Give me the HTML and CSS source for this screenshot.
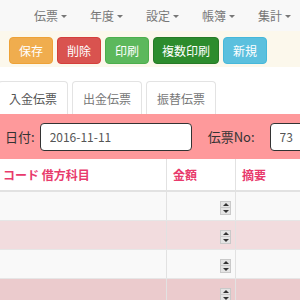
FILE: index.html
```html
<!DOCTYPE html>
<html lang="ja">
<head>
    <meta charset="UTF-8" />
    <title>伝票入力</title>
    <link rel="stylesheet" href="styles.css">
</head>
<body>

<nav class="navbar">
    <ul class="menu">
        <li>伝票<span class="caret"></span></li>
        <li>年度<span class="caret"></span></li>
        <li>設定<span class="caret"></span></li>
        <li>帳簿<span class="caret"></span></li>
        <li>集計<span class="caret"></span></li>
    </ul>
</nav>

<div class="toolbar">
    <button class="btn btn-save">保存</button>
    <button class="btn btn-delete">削除</button>
    <button class="btn btn-print">印刷</button>
    <button class="btn btn-multi">複数印刷</button>
    <button class="btn btn-new">新規</button>
</div>

<ul class="tabs">
    <li class="tab active">入金伝票</li>
    <li class="tab">出金伝票</li>
    <li class="tab">振替伝票</li>
</ul>

<div class="form-band">
    <label class="field-label">日付:</label>
    <input type="text" class="field date-field" value="2016-11-11" />
    <label class="field-label no-label">伝票No:</label>
    <input type="text" class="field no-field" value="73" />
</div>

<div class="table-wrap">
<table class="slip">
    <thead>
        <tr>
            <th class="col-account">コード 借方科目</th>
            <th class="col-amount">金額</th>
            <th class="col-memo">摘要</th>
        </tr>
    </thead>
    <tbody>
        <tr class="row-light">
            <td></td>
            <td class="amount"><span class="spin"><i class="up"></i><i class="down"></i></span></td>
            <td></td>
        </tr>
        <tr class="row-pink">
            <td></td>
            <td class="amount"><span class="spin"><i class="up"></i><i class="down"></i></span></td>
            <td></td>
        </tr>
        <tr class="row-light">
            <td></td>
            <td class="amount"><span class="spin"><i class="up"></i><i class="down"></i></span></td>
            <td></td>
        </tr>
        <tr class="row-pink-dark">
            <td></td>
            <td class="amount"><span class="spin"><i class="up"></i><i class="down"></i></span></td>
            <td></td>
        </tr>
    </tbody>
</table>
</div>

</body>
</html>
```

FILE: styles.css
```css
body {
  margin: 0;
  width: 300px;
  overflow: hidden;
  background: #fff;
  font-family: "Noto Sans CJK JP", "Noto Sans", sans-serif;
  font-size: 12px;
  color: #333;
}
.navbar {
  height: 31px;
  background: #f8f8f8;
}
.menu {
  list-style: none;
  margin: 0;
  padding: 0 0 0 34px;
  display: grid;
  grid-template-columns: repeat(5, 56px);
  height: 31px;
  align-items: center;
}
.menu li {
  color: #777;
  font-size: 12px;
  display: flex;
  align-items: center;
  white-space: nowrap;
}
.caret {
  display: inline-block;
  margin-left: 3px;
  margin-top: 2px;
  border-top: 3px solid #777;
  border-left: 3px solid transparent;
  border-right: 3px solid transparent;
}
.toolbar {
  background: #fcf8ec;
  padding: 6px 0 3px 9px;
  display: flex;
  gap: 4px;
}
.btn {
  height: 27px;
  padding: 0 9px;
  border: 1px solid transparent;
  border-radius: 4px;
  color: #fff;
  font-family: inherit;
  font-size: 12px;
  cursor: pointer;
}
.btn-save {
  background: #f0ad4e;
  border-color: #eea236;
}
.btn-delete {
  background: #d9534f;
  border-color: #d43f3a;
}
.btn-print {
  background: #5cb85c;
  border-color: #4cae4c;
}
.btn-multi {
  background: #2d8c2d;
  border-color: #267a26;
  padding: 0 8px;
}
.btn-new {
  background: #5bc0de;
  border-color: #46b8da;
}
.tabs {
  list-style: none;
  margin: 14px 0 0 -2px;
  padding: 0;
  display: flex;
  gap: 4px;
}
.tab {
  width: 70px;
  height: 33px;
  box-sizing: border-box;
  border: 1px solid #e3e3e3;
  border-bottom: none;
  border-radius: 4px 4px 0 0;
  display: flex;
  align-items: center;
  justify-content: center;
  color: #777;
}
.tab.active {
  color: #555;
}
.form-band {
  background: #fe999b;
  height: 45px;
  display: flex;
  align-items: center;
  padding-left: 5px;
  overflow: hidden;
}
.form-band > * {
  flex-shrink: 0;
}
.field-label {
  font-size: 13px;
  color: #333;
  margin-right: 5px;
  white-space: nowrap;
}
.no-label {
  margin-left: 16px;
  margin-right: 15px;
}
.field {
  height: 28px;
  box-sizing: border-box;
  border: 1px solid #333;
  border-radius: 4px;
  background: #fff;
  color: #555;
  font-family: inherit;
  font-size: 12px;
  padding: 0 9px;
}
.date-field {
  width: 152px;
}
.no-field {
  width: 60px;
}
.table-wrap {
  overflow: hidden;
}
.slip {
  border-collapse: collapse;
  width: 420px;
  table-layout: fixed;
}
.slip th {
  height: 31px;
  text-align: left;
  font-weight: bold;
  color: #e83a6c;
  border-bottom: 2px solid #e2e2e2;
  padding: 0 0 0 6px;
}
.slip th.col-account {
  width: 163px;
  padding-left: 3px;
}
.slip th.col-amount {
  width: 62px;
}
.slip td,
.slip th {
  border-left: 1px solid #e2e2e2;
}
.slip td:first-child,
.slip th:first-child {
  border-left: none;
}
.slip td {
  height: 28px;
  border-bottom: 1px solid #e6e6e6;
  padding: 0;
}
.row-light {
  background: #f9f9f9;
}
.row-pink {
  background: #f2dcde;
}
.row-pink-dark {
  background: #ebcbcd;
}
.amount {
  text-align: right;
}
.spin {
  display: inline-flex;
  flex-direction: column;
  width: 11px;
  height: 14px;
  margin-right: 4px;
  vertical-align: middle;
  background: #e4e4e4;
  border: 1px solid #c9c9c9;
  box-sizing: border-box;
}
.spin i {
  flex: 1;
  display: flex;
  align-items: center;
  justify-content: center;
}
.spin i::after {
  content: "";
  border-left: 3px solid transparent;
  border-right: 3px solid transparent;
}
.spin .up::after {
  border-bottom: 3px solid #333;
}
.spin .down {
  border-top: 1px solid #c9c9c9;
}
.spin .down::after {
  border-top: 3px solid #333;
}
```
